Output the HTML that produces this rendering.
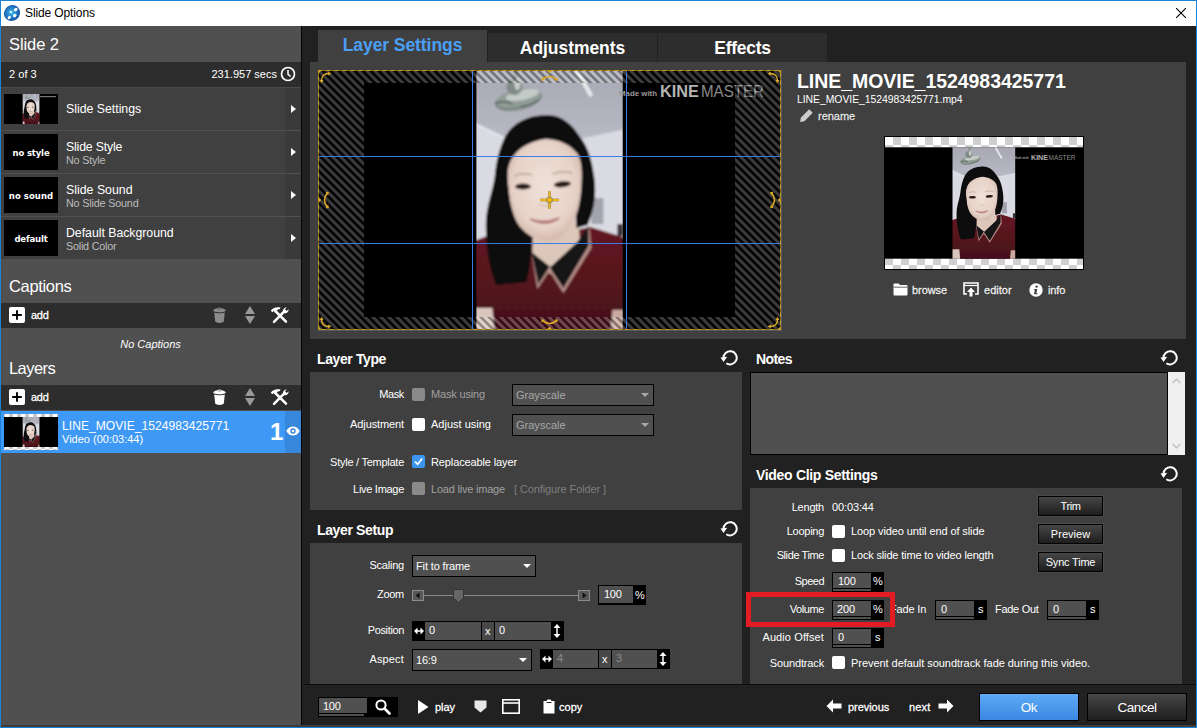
<!DOCTYPE html>
<html><head><meta charset="utf-8"><title>Slide Options</title>
<style>
*{box-sizing:border-box;margin:0;padding:0}
html,body{width:1197px;height:728px;overflow:hidden;background:#212121}
body{font-family:"Liberation Sans",sans-serif;font-size:11px;color:#fff;position:relative}
.a{position:absolute}
.t{position:absolute;white-space:nowrap;line-height:14px}
.r{text-align:right}
.lk{-webkit-text-stroke:0.300px currentColor;text-shadow:0 0 1.500px rgba(0,0,0,0.700)}
#win{position:absolute;left:0;top:0;width:1197px;height:728px;background:#212121}
#frame{left:0;top:0;width:1197px;height:728px;border:1px solid #1883d7;border-top-color:#1883d7}
#title{left:0;top:0;width:1197px;height:26px;background:#fff;color:#000}
#left{left:0;top:26px;width:301px;height:702px;background:#505050}
.item{left:0;width:301px;height:42px;background:#404040}
.item .arr{position:absolute;left:285px;top:0;width:16px;height:42px;background:#3a3a3a}
.item .arr:after{content:"";position:absolute;left:6px;top:16.500px;border-left:5px solid #fff;border-top:4.500px solid transparent;border-bottom:4.500px solid transparent}
.thumb{position:absolute;left:4px;top:6px;width:54px;height:30px;background:#000;color:#fff;font-weight:bold;font-size:8.5px;text-align:center;line-height:32px;font-family:"DejaVu Sans","Liberation Sans",sans-serif}
.thumb.tx{top:3px;height:36px;line-height:39px}
.bar{left:0;width:301px;background:#2d2d2d}
.hd{font-size:14px;font-weight:bold;line-height:16px}
.pan{background:#404040}
.cb{position:absolute;width:13px;height:13px;border-radius:2px;background:#fff}
.cb.dis{background:#8a8a8a}
.cb.on{background:#3c96f0}
.sel{position:absolute;height:22px;background:#505050;border:1px solid #000;line-height:20px;padding-left:3px;font-size:11px}
.sel:after{content:"";position:absolute;right:4px;top:8px;border-top:4.500px solid #fff;border-left:4.200px solid transparent;border-right:4.200px solid transparent}
.sel.dis{color:#a8a8a8}
.sel.dis:after{border-top-color:#a8a8a8}
.bk{position:absolute;background:#000}
.in{position:absolute;background:#505050;line-height:17px;font-size:11px;padding-left:4px}
.dim{color:#8c8c8c}
.btn{position:absolute;border:1px solid #000;background:linear-gradient(#464646,#1e1e1e);text-align:center;font-size:11px;line-height:19px;box-shadow:0 0 0 1px #4a4a4a}
</style></head><body>
<div id="win">
<svg width="0" height="0" style="position:absolute"><defs>
<linearGradient id="ceil" x1="0" y1="0" x2="0" y2="1"><stop offset="0" stop-color="#a6a7b2"/><stop offset="1" stop-color="#b8b9c4"/></linearGradient>
<linearGradient id="shirt" x1="0" y1="0" x2="0" y2="1"><stop offset="0" stop-color="#651822"/><stop offset="1" stop-color="#45101a"/></linearGradient>
<radialGradient id="face" cx="0.5" cy="0.45" r="0.6"><stop offset="0" stop-color="#efe1d8"/><stop offset="0.7" stop-color="#e6d2c8"/><stop offset="1" stop-color="#cfb0a2"/></radialGradient>
<filter id="bl" x="-5%" y="-5%" width="110%" height="110%"><feGaussianBlur stdDeviation="0.9"/></filter>
<clipPath id="pc"><rect width="146.3" height="260"/></clipPath>
<symbol id="photo" viewBox="0 0 146.3 260" overflow="hidden"><g clip-path="url(#pc)"><g filter="url(#bl)">
<rect x="-3" y="-3" width="152" height="266" fill="#dadae2"/>
<path d="M-3-3H150V59L103 69H30L-3 53z" fill="url(#ceil)"/>
<path d="M-3 53L32 70" stroke="#e4e5ee" stroke-width="2" fill="none"/>
<path d="M100 0L115 26" stroke="#e9ecef" stroke-width="4" fill="none"/>
<path d="M39 0L41 18" stroke="#8a938f" stroke-width="5" fill="none"/>
<ellipse cx="42" cy="30" rx="24" ry="10" fill="#7d8883" transform="rotate(-12 42 30)"/><ellipse cx="42" cy="28" rx="23" ry="8.500" fill="#929d98" transform="rotate(-12 42 28)"/>
<ellipse cx="46" cy="25" rx="17" ry="5" fill="#c3cbc7" transform="rotate(-12 46 25)"/>
<ellipse cx="38" cy="17" rx="8" ry="8" fill="#7f8a86"/><ellipse cx="41" cy="14" rx="3" ry="6" fill="#c9d0cc"/><path d="M19 33Q30 30 36 34" stroke="#4c5652" stroke-width="1.500" fill="none"/><path d="M44 36Q54 36 62 30" stroke="#5a6460" stroke-width="1.200" fill="none"/>
<rect x="115" y="128" width="12" height="26" fill="#a3a3ae"/>
<rect x="141" y="154" width="6" height="12" fill="#3a3038"/>
<path d="M-3 171L22 162L55 160L100 160L114 157L150 168V263H-3z" fill="url(#shirt)"/>
<path d="M-3 238H16L18 263H-3z" fill="#d9c6bd"/>
<path d="M136 240H150V263H134z" fill="#c9a9a0"/>
<path d="M56 150H102L104 178L74 204L56 188z" fill="#dcc7ba"/>
<path d="M55 184L61 219L73 201L87 223L115 178L113 156L102 172L74 200z" fill="#b48c86"/>
<path d="M55 182L62 214L73 197L87 218L112 176L112 156L101 172L74 197z" fill="#141418"/>
<path d="M70 45C50 45 35 54 28 68C23 79 20 90 18.500 105C16 125 9 135 9.500 160C10 185 15 205 20 215L50 212C54 196 56 180 56 168L48 110L97 105L100 158L111 155C118 140 120 125 118 108C115 85 110 75 103 66C96 55 86 45 71 45z" fill="#0c0c0e"/>
<path d="M37 86C44 76 58 70 70 69C84 70 95 75 102 85C105 93 106 100 105 115C104 135 100 148 94 156C88 165 80 171 72 171C60 171 48 164 41 153C35 142 31 122 31 105C31 98 33 92 37 86z" fill="url(#face)"/>
<path d="M31 108C31 98 33 90 38 82L28 84L24 110L34 135z" fill="#0c0c0e"/>
<ellipse cx="46.500" cy="116.500" rx="8" ry="3" fill="#2c1c14"/>
<ellipse cx="86" cy="114.300" rx="8.500" ry="3" fill="#2c1c14" transform="rotate(-6 86 114.300)"/>
<path d="M38 106Q46 102 56 105" stroke="#b9a496" stroke-width="1.5" fill="none"/>
<path d="M76 104Q86 100 96 103" stroke="#b9a496" stroke-width="1.5" fill="none"/>
<path d="M54 149Q68 154 83 148Q70 158 54 149z" fill="#b77a78" stroke="#b77a78" stroke-width="1.5"/>
<path d="M62 134Q68 138 75 134" stroke="#d4b8a8" stroke-width="1.5" fill="none"/>
</g></g></symbol>
</defs></svg>

<div id="title" class="a">
<svg class="a" style="left:3px;top:4px" width="18" height="18" viewBox="0 0 18 18"><defs><radialGradient id="lg" cx="0.5" cy="0.45" r="0.6"><stop offset="0" stop-color="#46c4ec"/><stop offset="0.55" stop-color="#2277c4"/><stop offset="1" stop-color="#154a94"/></radialGradient></defs><ellipse cx="9" cy="9" rx="8.300" ry="7.700" fill="url(#lg)" transform="rotate(-40 9 9)"/><ellipse cx="12.800" cy="5.500" rx="2" ry="1.500" fill="#fff" transform="rotate(-40 12.800 5.500)"/><ellipse cx="7.800" cy="8" rx="1.300" ry="1.100" fill="#fff"/><ellipse cx="11.800" cy="11.500" rx="2" ry="1.500" fill="#fff" transform="rotate(-40 11.800 11.500)"/><ellipse cx="6.300" cy="13.500" rx="1.800" ry="1.400" fill="#fff" transform="rotate(-40 6.300 13.500)"/></svg>
<div class="t" style="left:25px;top:6px;font-size:12px;letter-spacing:-0.12px">Slide Options</div>
<svg class="a" style="left:1176px;top:8px" width="10" height="10" viewBox="0 0 10 10"><path d="M0 0L10 10M10 0L0 10" stroke="#000" stroke-width="1.100" fill="none"/></svg>
</div>
<div id="left" class="a">
<div class="t" style="left:9px;top:7.500px;font-size:16.5px;line-height:20px;letter-spacing:-0.09px">Slide 2</div>
<div class="a bar" style="top:36px;height:25px"></div>
<div class="t" style="left:9px;top:41px;letter-spacing:0.03px">2 of 3</div>
<div class="t r" style="right:24px;top:41px;letter-spacing:0.01px">231.957 secs</div>
<svg class="a" style="left:280px;top:40px" width="16" height="16" viewBox="0 0 16 16"><circle cx="8" cy="8" r="6.5" fill="none" stroke="#fff" stroke-width="1.7"/><path d="M8 4v4.3l2.6 2.2" fill="none" stroke="#fff" stroke-width="1.5"/></svg>
<div class="a" style="left:0;top:61px;width:301px;height:1px;background:#4a4a4a"></div>
<div class="a item" style="top:62px"><div class="thumb"><svg width="54" height="30" viewBox="0 0 54 30" style="display:block"><rect width="54" height="30" fill="#000"/><use href="#photo" x="18.6" y="0" width="16.9" height="30"/><rect x="36" y="2" width="16" height="1.200" fill="#777"/></svg></div><div class="t" style="left:66px;top:14px;font-size:12.3px;line-height:15px;letter-spacing:-0.00px">Slide Settings</div><div class="arr"></div></div>
<div class="a item" style="top:105px"><div class="thumb tx" style=";letter-spacing:-0.15px">no style</div><div class="t" style="left:66px;top:8.5px;font-size:12.3px;line-height:15px;letter-spacing:-0.18px">Slide Style</div><div class="t" style="left:66px;top:23px;font-size:10.8px;color:#bdbdbd;line-height:13px;letter-spacing:-0.18px">No Style</div><div class="arr"></div></div>
<div class="a item" style="top:148px"><div class="thumb tx" style=";letter-spacing:0.06px">no sound</div><div class="t" style="left:66px;top:8.5px;font-size:12.3px;line-height:15px;letter-spacing:0.02px">Slide Sound</div><div class="t" style="left:66px;top:23px;font-size:10.8px;color:#bdbdbd;line-height:13px;letter-spacing:-0.18px">No Slide Sound</div><div class="arr"></div></div>
<div class="a item" style="top:191px"><div class="thumb tx" style=";letter-spacing:-0.16px">default</div><div class="t" style="left:66px;top:8.5px;font-size:12.3px;line-height:15px;letter-spacing:-0.02px">Default Background</div><div class="t" style="left:66px;top:23px;font-size:10.8px;color:#bdbdbd;line-height:13px;letter-spacing:-0.22px">Solid Color</div><div class="arr"></div></div>
<div class="t" style="left:9px;top:251px;font-size:16.500px;line-height:19px;letter-spacing:-0.34px">Captions</div>
<div class="a bar" style="top:277px;height:25px"></div>
<div class="t" style="left:0;width:301px;top:311px;text-align:center;font-style:italic;letter-spacing:0.01px">No Captions</div>
<div class="t" style="left:9px;top:333px;font-size:16.500px;line-height:19px;letter-spacing:-0.57px">Layers</div>
<div class="a bar" style="top:359px;height:25px"></div>
<svg class="a" style="left:9px;top:281px" width="16" height="16" viewBox="0 0 16 16"><rect width="16" height="16" rx="2" fill="#fff"/><path d="M8 3.2V12.8M3.200 8H12.8" stroke="#000" stroke-width="1.9"/></svg>
<div class="t lk" style="left:31px;top:282px;letter-spacing:-0.25px">add</div>
<svg class="a" style="left:213px;top:281px" width="13" height="16" viewBox="0 0 13 16"><path d="M0.3 3.600C0.3 2.200 3 1.400 4.700 1.200C5 0.200 8 0.200 8.300 1.200C10 1.400 12.700 2.200 12.700 3.600C12.700 4.800 9.800 5.400 6.500 5.400S0.300 4.800 0.300 3.600z" fill="#8c8c8c"/><path d="M1.200 5.600C3 6.500 10 6.500 11.800 5.600L10.800 14.600C10 16.300 3 16.300 2.200 14.600z" fill="#8c8c8c"/><path d="M5.300 2.200Q6.500 1.200 7.700 2.200" stroke="#2d2d2d" stroke-width="0.7" fill="none"/></svg>
<svg class="a" style="left:245px;top:280px" width="10" height="18" viewBox="0 0 10 18"><path d="M5 0L10 8H0z" fill="#999"/><path d="M5 18L10 10H0z" fill="#999"/></svg>
<svg class="a" style="left:270px;top:280px" width="20" height="18" viewBox="0 0 20 18"><path d="M4 15.800L14.500 5.200" stroke="#fff" stroke-width="2.500" stroke-linecap="round"/><path d="M16 15.600L5.800 5.500" stroke="#fff" stroke-width="2.500" stroke-linecap="round"/><path d="M0.800 4.800C2.500 1.800 6.500 0.500 10.500 1.600L9.800 3.200C8.500 3 7.500 3.400 7 4.400L5 6.400L3.600 5L2.400 6.200z" fill="#fff"/><path d="M13.200 6.400C12.200 4 14 1.200 16.800 1.400L15 3.200L16.600 5L18.600 3.200C19 5.800 16.500 7.800 14 7z" fill="#fff"/></svg>
<svg class="a" style="left:9px;top:363px" width="16" height="16" viewBox="0 0 16 16"><rect width="16" height="16" rx="2" fill="#fff"/><path d="M8 3.2V12.8M3.200 8H12.8" stroke="#000" stroke-width="1.9"/></svg>
<div class="t lk" style="left:31px;top:364px;letter-spacing:-0.25px">add</div>
<svg class="a" style="left:213px;top:363px" width="13" height="16" viewBox="0 0 13 16"><path d="M0.3 3.600C0.3 2.200 3 1.400 4.700 1.200C5 0.200 8 0.200 8.300 1.200C10 1.400 12.700 2.200 12.700 3.600C12.700 4.800 9.800 5.400 6.500 5.400S0.300 4.800 0.300 3.600z" fill="#fff"/><path d="M1.200 5.600C3 6.500 10 6.500 11.800 5.600L10.800 14.600C10 16.300 3 16.300 2.200 14.600z" fill="#fff"/><path d="M5.300 2.200Q6.500 1.200 7.700 2.200" stroke="#2d2d2d" stroke-width="0.7" fill="none"/></svg>
<svg class="a" style="left:245px;top:362px" width="10" height="18" viewBox="0 0 10 18"><path d="M5 0L10 8H0z" fill="#999"/><path d="M5 18L10 10H0z" fill="#999"/></svg>
<svg class="a" style="left:270px;top:362px" width="20" height="18" viewBox="0 0 20 18"><path d="M4 15.800L14.500 5.200" stroke="#fff" stroke-width="2.500" stroke-linecap="round"/><path d="M16 15.600L5.800 5.500" stroke="#fff" stroke-width="2.500" stroke-linecap="round"/><path d="M0.800 4.800C2.500 1.800 6.500 0.500 10.500 1.600L9.800 3.200C8.500 3 7.500 3.400 7 4.400L5 6.400L3.600 5L2.400 6.200z" fill="#fff"/><path d="M13.200 6.400C12.200 4 14 1.200 16.800 1.400L15 3.200L16.600 5L18.600 3.200C19 5.800 16.500 7.800 14 7z" fill="#fff"/></svg>
<div class="a" style="left:0;top:385px;width:301px;height:42px;background:#3e98f5"><div class="a" style="left:285px;top:0;width:16px;height:42px;background:#3787dc"></div>
<svg class="a" style="left:4px;top:3px" width="54" height="36" viewBox="0 0 54 36"><defs><pattern id="chk2" width="8" height="8" patternUnits="userSpaceOnUse" patternTransform="translate(1 -1)"><rect width="8" height="8" fill="#fff"/><rect x="4" width="4" height="4" fill="#c8c8c8"/><rect y="4" width="4" height="4" fill="#c8c8c8"/></pattern></defs><rect width="54" height="36" fill="url(#chk2)"/><rect y="3" width="54" height="30" fill="#000"/><use href="#photo" x="18.6" y="3" width="16.900" height="30"/></svg>
<div class="t" style="left:62px;top:8px;font-size:12.1px;letter-spacing:0.02px">LINE_MOVIE_1524983425771</div>
<div class="t" style="left:62px;top:22px;font-size:11px;line-height:13px;letter-spacing:0.00px">Video (00:03:44)</div>
<div class="t" style="left:270px;top:7px;font-size:24px;font-weight:bold;line-height:28px">1</div>
<svg class="a" style="left:286px;top:15px" width="14" height="10" viewBox="0 0 14 10"><path d="M0.3 5C2 1.8 4.4 0.5 7 0.5s5 1.3 6.7 4.5C12 8.2 9.6 9.5 7 9.5S2 8.2 0.3 5z" fill="#fff"/><circle cx="7" cy="5" r="2.7" fill="#3787dc"/><circle cx="7" cy="5" r="1.3" fill="#fff"/></svg>
</div>
</div>
<div class="a" style="left:301px;top:26px;width:1px;height:702px;background:#050505"></div>
<!-- tabs -->
<div class="a" style="left:318px;top:30px;width:169px;height:33px;background:#404040"></div>
<div class="t" style="left:318px;top:35.300px;width:169px;text-align:center;font-size:17.5px;font-weight:bold;color:#4a9ff5;line-height:20px;letter-spacing:-0.07px">Layer Settings</div>
<div class="a" style="left:488px;top:33px;width:169px;height:29px;background:#2d2d2d"></div>
<div class="t" style="left:488px;top:37.700px;width:169px;text-align:center;font-size:17.5px;font-weight:bold;line-height:20px;letter-spacing:-0.06px">Adjustments</div>
<div class="a" style="left:658px;top:33px;width:169px;height:29px;background:#2d2d2d"></div>
<div class="t" style="left:658px;top:37.700px;width:169px;text-align:center;font-size:17.5px;font-weight:bold;line-height:20px;letter-spacing:-0.27px">Effects</div>
<div class="a pan" style="left:310px;top:62px;width:876px;height:277px"></div>
<svg class="a" style="left:318px;top:70px" width="463" height="260" viewBox="0 0 463 260">
<defs><pattern id="hatch" width="5.657" height="5.657" patternUnits="userSpaceOnUse" patternTransform="rotate(-45) translate(1.4 0)"><rect width="2.550" height="5.657" fill="rgba(0,0,0,0.340)"/><rect x="2.550" width="3.110" height="5.657" fill="rgba(255,255,255,0.235)"/></pattern></defs>
<rect width="463" height="260" fill="#000"/>
<use href="#photo" x="158.4" y="0" width="146.3" height="260"/>
<text x="301" y="25.500" font-size="8" font-weight="bold" fill="#9a9a9a" font-family="Liberation Sans,sans-serif" textLength="38" lengthAdjust="spacingAndGlyphs">Made with</text>
<text x="342" y="27" font-size="17" font-weight="bold" fill="#b4b4b4" font-family="Liberation Sans,sans-serif" textLength="39" lengthAdjust="spacingAndGlyphs">KINE</text>
<text x="383" y="27" font-size="17" fill="#8a8a8a" font-family="Liberation Sans,sans-serif" textLength="63" lengthAdjust="spacingAndGlyphs">MASTER</text>
<path d="M0 0H463V260H0zM46 13V247H417V13z" fill="url(#hatch)" fill-rule="evenodd"/>
<path d="M154.5 0V260M308.5 0V260M0 86.5H463M0 173.5H463" stroke="#3d7be6" stroke-width="1" fill="none"/>
<rect x="0.5" y="0.5" width="462" height="259" fill="none" stroke="#8a680e" stroke-width="1"/><rect x="0.5" y="0.5" width="462" height="259" fill="none" stroke="#c89c24" stroke-width="1" stroke-dasharray="4 4"/>
<g transform="translate(231.500 0.500)"><path d="M-2.700 0H2.700L0 2.800z" fill="#dcaa24"/><path d="M-6.500 8.500Q0 3.500 6.500 8.500" fill="none" stroke="#dcaa24" stroke-width="1.600"/><path d="M-8.200 6.800L-4.600 9.600L-8 10.400z" fill="#dcaa24"/><path d="M8.200 6.800L4.600 9.600L8 10.400z" fill="#dcaa24"/></g><g transform="translate(231.500 259.500) scale(1 -1)"><path d="M-2.700 0H2.700L0 2.800z" fill="#dcaa24"/><path d="M-6.500 8.500Q0 3.500 6.500 8.500" fill="none" stroke="#dcaa24" stroke-width="1.600"/><path d="M-8.200 6.800L-4.600 9.600L-8 10.400z" fill="#dcaa24"/><path d="M8.200 6.800L4.600 9.600L8 10.400z" fill="#dcaa24"/></g><g transform="translate(0.500 130) rotate(-90)"><path d="M-2.700 0H2.700L0 2.800z" fill="#dcaa24"/><path d="M-6.500 8.500Q0 3.500 6.500 8.500" fill="none" stroke="#dcaa24" stroke-width="1.600"/><path d="M-8.200 6.800L-4.600 9.600L-8 10.400z" fill="#dcaa24"/><path d="M8.200 6.800L4.600 9.600L8 10.400z" fill="#dcaa24"/></g><g transform="translate(462.500 130) rotate(90)"><path d="M-2.700 0H2.700L0 2.800z" fill="#dcaa24"/><path d="M-6.500 8.500Q0 3.500 6.500 8.500" fill="none" stroke="#dcaa24" stroke-width="1.600"/><path d="M-8.200 6.800L-4.600 9.600L-8 10.400z" fill="#dcaa24"/><path d="M8.200 6.800L4.600 9.600L8 10.400z" fill="#dcaa24"/></g>
<g transform="translate(0.500 0.500)"><path d="M0 0H3L0 3z" fill="#dcaa24"/><path d="M10.800 3Q2.800 2.800 3 10.800" fill="none" stroke="#dcaa24" stroke-width="1.400"/><path d="M12.800 3.200L9.600 1L9.600 5z" fill="#dcaa24"/><path d="M3.200 12.800L1 9.600L5 9.600z" fill="#dcaa24"/></g><g transform="translate(462.500 0.500) scale(-1 1)"><path d="M0 0H3L0 3z" fill="#dcaa24"/><path d="M10.800 3Q2.800 2.800 3 10.800" fill="none" stroke="#dcaa24" stroke-width="1.400"/><path d="M12.800 3.200L9.600 1L9.600 5z" fill="#dcaa24"/><path d="M3.200 12.800L1 9.600L5 9.600z" fill="#dcaa24"/></g><g transform="translate(0.500 259.500) scale(1 -1)"><path d="M0 0H3L0 3z" fill="#dcaa24"/><path d="M10.800 3Q2.800 2.800 3 10.800" fill="none" stroke="#dcaa24" stroke-width="1.400"/><path d="M12.800 3.200L9.600 1L9.600 5z" fill="#dcaa24"/><path d="M3.200 12.800L1 9.600L5 9.600z" fill="#dcaa24"/></g><g transform="translate(462.500 259.500) scale(-1 -1)"><path d="M0 0H3L0 3z" fill="#dcaa24"/><path d="M10.800 3Q2.800 2.800 3 10.800" fill="none" stroke="#dcaa24" stroke-width="1.400"/><path d="M12.800 3.200L9.600 1L9.600 5z" fill="#dcaa24"/><path d="M3.200 12.800L1 9.600L5 9.600z" fill="#dcaa24"/></g>
<path d="M231.500 121V139M222 130H241" stroke="#555" stroke-width="3" stroke-opacity="0.500" fill="none"/><path d="M231.500 121V139M222 130H241" stroke="#edb512" stroke-width="1.800" fill="none"/><circle cx="231.500" cy="130" r="3" fill="#edb512" stroke="#666" stroke-width="0.600"/>
</svg>
<div class="a" style="left:318px;top:330px;width:464px;height:1px;background:#585c60"></div><div class="a" style="left:781px;top:70px;width:1px;height:260px;background:#585c60"></div>
<div class="t" style="left:797px;top:70px;font-size:19.500px;font-weight:bold;line-height:22px;letter-spacing:-0.05px">LINE_MOVIE_1524983425771</div>
<div class="t" style="left:797px;top:93px;font-size:10.400px;line-height:13px;letter-spacing:-0.03px">LINE_MOVIE_1524983425771.mp4</div>
<svg class="a" style="left:799px;top:108px" width="15" height="15" viewBox="0 0 14 14"><path d="M9.5 1.2l3.3 3.3L5 12.3 1 13l0.7-4z" fill="#ccc"/></svg>
<div class="t lk" style="left:818px;top:109px;color:#e6e6e6;letter-spacing:-0.03px">rename</div>
<svg class="a" style="left:884px;top:136px" width="200" height="134" viewBox="0 0 200 134">
<defs><pattern id="chk" width="16" height="16" patternUnits="userSpaceOnUse" patternTransform="translate(1 1)"><rect width="16" height="16" fill="#fff"/><rect x="8" width="8" height="8" fill="#cfcfcf"/><rect y="8" width="8" height="8" fill="#cfcfcf"/></pattern></defs>
<rect width="200" height="134" fill="#000"/><rect x="1" y="1" width="198" height="132" fill="url(#chk)"/>
<rect x="1" y="11.3" width="198" height="111.4" fill="#000"/>
<use href="#photo" x="68.5" y="11.3" width="62.7" height="111.4"/>
<text x="130" y="23" font-size="3" font-weight="bold" fill="#999" font-family="Liberation Sans,sans-serif">Made with</text>
<text x="147" y="23.5" font-size="6.5" font-weight="bold" fill="#b4b4b4" font-family="Liberation Sans,sans-serif" textLength="17" lengthAdjust="spacingAndGlyphs">KINE</text>
<text x="164.5" y="23.5" font-size="6.5" fill="#8a8a8a" font-family="Liberation Sans,sans-serif" textLength="27" lengthAdjust="spacingAndGlyphs">MASTER</text>
</svg>
<svg class="a" style="left:893px;top:283px" width="15" height="13" viewBox="0 0 15 13"><path d="M0.5 1.5Q0.5 0.5 1.5 0.5H5.5L7 2H13.5Q14.5 2 14.5 3V11.5Q14.5 12.5 13.5 12.5H1.5Q0.5 12.5 0.5 11.5z" fill="#fff"/><path d="M0.5 4.2H14.5" stroke="#404040" stroke-width="0.8"/></svg>
<div class="t lk" style="left:912px;top:283px;color:#f0f0f0;letter-spacing:-0.06px">browse</div>
<svg class="a" style="left:963px;top:282px" width="16" height="15" viewBox="0 0 16 15"><path d="M4 12H1V1H15V12H12" fill="none" stroke="#fff" stroke-width="1.6"/><path d="M1 3.5H15" stroke="#fff" stroke-width="1.2"/><path d="M8 5.5L12 10H9.5V14.5H6.5V10H4z" fill="#fff"/></svg>
<div class="t lk" style="left:984px;top:283px;color:#f0f0f0;letter-spacing:0.03px">editor</div>
<svg class="a" style="left:1029px;top:283px" width="14" height="14" viewBox="0 0 14 14"><circle cx="7" cy="7" r="6.7" fill="#fff"/><circle cx="7.6" cy="3.6" r="1.2" fill="#404040"/><path d="M5.3 6H8.2L7.4 10.3H8.5V11.3H5L5.8 7H5.1z" fill="#404040"/></svg>
<div class="t lk" style="left:1048px;top:283px;color:#f0f0f0;letter-spacing:-0.11px">info</div>
<!-- layer type -->
<div class="t hd" style="left:317px;top:351px;letter-spacing:-0.39px">Layer Type</div>
<svg class="a" style="left:720px;top:349px" width="18" height="18" viewBox="0 0 18 18"><path d="M3.500 8.800A6.600 6.600 0 1 1 6.300 14.200" fill="none" stroke="#fff" stroke-width="2"/><path d="M0.500 8.400L7.200 7.800L3.600 13z" fill="#fff"/></svg><svg class="a" style="left:720px;top:520px" width="18" height="18" viewBox="0 0 18 18"><path d="M3.500 8.800A6.600 6.600 0 1 1 6.300 14.200" fill="none" stroke="#fff" stroke-width="2"/><path d="M0.500 8.400L7.200 7.800L3.600 13z" fill="#fff"/></svg><svg class="a" style="left:1160px;top:349px" width="18" height="18" viewBox="0 0 18 18"><path d="M3.500 8.800A6.600 6.600 0 1 1 6.300 14.200" fill="none" stroke="#fff" stroke-width="2"/><path d="M0.500 8.400L7.200 7.800L3.600 13z" fill="#fff"/></svg><svg class="a" style="left:1160px;top:465px" width="18" height="18" viewBox="0 0 18 18"><path d="M3.500 8.800A6.600 6.600 0 1 1 6.300 14.200" fill="none" stroke="#fff" stroke-width="2"/><path d="M0.500 8.400L7.200 7.800L3.600 13z" fill="#fff"/></svg>
<div class="a pan" style="left:310px;top:372px;width:432px;height:138px"></div>
<div class="t r" style="right:793px;top:387px;letter-spacing:-0.37px">Mask</div>
<div class="cb dis" style="left:412px;top:388px"></div>
<div class="t" style="left:431px;top:387px;color:#a0a0a0;letter-spacing:-0.17px">Mask using</div>
<div class="sel dis" style="left:512px;top:384px;width:142px;letter-spacing:0.01px">Grayscale</div>
<div class="t r" style="right:793px;top:417px;letter-spacing:-0.11px">Adjustment</div>
<div class="cb" style="left:412px;top:418px"></div>
<div class="t" style="left:431px;top:417px;letter-spacing:-0.00px">Adjust using</div>
<div class="sel dis" style="left:512px;top:414px;width:142px;letter-spacing:0.01px">Grayscale</div>
<div class="t r" style="right:793px;top:455px;letter-spacing:-0.26px">Style / Template</div>
<div class="cb on" style="left:412px;top:455px"><svg width="13" height="13" viewBox="0 0 13 13" style="display:block"><path d="M3 6.6l2.6 2.7L10.2 3.4" fill="none" stroke="#fff" stroke-width="1.7"/></svg></div>
<div class="t" style="left:431px;top:455px;letter-spacing:-0.12px">Replaceable layer</div>
<div class="t r" style="right:793px;top:482px;letter-spacing:-0.29px">Live Image</div>
<div class="cb dis" style="left:412px;top:482px"></div>
<div class="t" style="left:431px;top:482px;color:#a0a0a0;letter-spacing:-0.21px">Load live image</div>
<div class="t" style="left:514px;top:482px;color:#7d7d7d;letter-spacing:-0.11px">[ Configure Folder ]</div>
<!-- layer setup -->
<div class="t hd" style="left:317px;top:522px;letter-spacing:-0.36px">Layer Setup</div>
<div class="a pan" style="left:310px;top:543px;width:432px;height:141px"></div>
<div class="t r" style="right:793px;top:558px;letter-spacing:-0.21px">Scaling</div>
<div class="sel" style="left:412px;top:555px;width:124px;letter-spacing:-0.14px">Fit to frame</div>
<div class="t r" style="right:793px;top:587px;letter-spacing:-0.28px">Zoom</div>
<div class="a" style="left:424px;top:595px;width:154px;height:1px;background:#888"></div>
<div class="a" style="left:412px;top:590px;width:12px;height:11px;background:#585858;border:1px solid #8c8c8c"></div><svg class="a" style="left:415px;top:592px" width="5" height="7" viewBox="0 0 5 7"><path d="M4.500 0.500V6.500L0.500 3.500z" fill="#111"/></svg>
<div class="a" style="left:578px;top:590px;width:12px;height:11px;background:#585858;border:1px solid #8c8c8c"></div><svg class="a" style="left:582px;top:592px" width="5" height="7" viewBox="0 0 5 7"><path d="M0.500 0.500V6.500L4.500 3.500z" fill="#111"/></svg>
<svg class="a" style="left:453px;top:589px" width="11" height="14" viewBox="0 0 11 14"><path d="M0.500 0.500H10.500V9L5.500 13.500L0.500 9z" fill="#666" stroke="#333" stroke-width="1"/></svg>
<div class="bk" style="left:598px;top:585px;width:48px;height:20px"></div><div class="in" style="left:599px;top:586px;width:34px;height:17px;padding-left:5px;letter-spacing:-0.29px">100</div><div class="t" style="left:635px;top:588px">%</div>
<div class="t r" style="right:793px;top:623px;letter-spacing:-0.36px">Position</div>
<div class="bk" style="left:412px;top:621px;width:152px;height:20px"></div>
<div class="in" style="left:425px;top:622px;width:56px;height:18px;line-height:17px">0</div><div class="in" style="left:482px;top:622px;width:12px;height:18px;padding-left:3px;line-height:19px;background:#484848">x</div><div class="in" style="left:495px;top:622px;width:56px;height:18px;line-height:17px">0</div>
<div class="t r" style="right:793px;top:652px;letter-spacing:0.16px">Aspect</div>
<div class="sel" style="left:412px;top:649px;width:120px;letter-spacing:-0.21px">16:9</div>
<div class="bk" style="left:540px;top:649px;width:130px;height:20px"></div>
<div class="in dim" style="left:553px;top:650px;width:45px;height:18px;line-height:17px">4</div><div class="in" style="left:599px;top:650px;width:12px;height:18px;padding-left:3px;line-height:19px;background:#484848">x</div><div class="in dim" style="left:612px;top:650px;width:45px;height:18px;line-height:17px">3</div>
<svg class="a" style="left:414px;top:627px" width="10" height="8" viewBox="0 0 10 8"><path d="M0 4L3.500 0.500V7.500zM10 4L6.500 0.500V7.500z" fill="#fff"/><path d="M2 4H8" stroke="#fff" stroke-width="1.500"/></svg>
<svg class="a" style="left:553px;top:624px" width="8" height="14" viewBox="0 0 8 14"><path d="M4 0L7.500 4H0.500zM4 14L7.500 10H0.500z" fill="#fff"/><path d="M4 3V11" stroke="#fff" stroke-width="1.500"/></svg>
<svg class="a" style="left:542px;top:655px" width="10" height="8" viewBox="0 0 10 8"><path d="M0 4L3.500 0.500V7.500zM10 4L6.500 0.500V7.500z" fill="#fff"/><path d="M2 4H8" stroke="#fff" stroke-width="1.500"/></svg>
<svg class="a" style="left:659px;top:652px" width="8" height="14" viewBox="0 0 8 14"><path d="M4 0L7.500 4H0.500zM4 14L7.500 10H0.500z" fill="#fff"/><path d="M4 3V11" stroke="#fff" stroke-width="1.500"/></svg>
<!-- bottom bar -->
<div class="a" style="left:303px;top:684px;width:893px;height:1px;background:#0c0c0c"></div>
<div class="bk" style="left:318px;top:697px;width:80px;height:20px"></div><div class="in" style="left:319px;top:698px;width:48px;height:15px;line-height:16px;letter-spacing:-0.29px">100</div><div class="a" style="left:319px;top:714px;width:45px;height:2px;background:#505050"></div>
<svg class="a" style="left:375px;top:699px" width="16" height="16" viewBox="0 0 16 16"><circle cx="6" cy="6" r="4.600" fill="none" stroke="#fff" stroke-width="2"/><path d="M9.500 9.500L14.500 14.500" stroke="#fff" stroke-width="2.600" stroke-linecap="round"/></svg>
<svg class="a" style="left:418px;top:700px" width="11" height="14" viewBox="0 0 11 14"><path d="M0 0L10.500 7L0 14z" fill="#fff"/></svg>
<svg class="a" style="left:474px;top:700px" width="13" height="13" viewBox="0 0 13 13"><path d="M0.500 0.500H12.500V7.500L6.500 12.500L0.500 7.500z" fill="#e8e8e8"/></svg>
<svg class="a" style="left:502px;top:699px" width="18" height="15" viewBox="0 0 18 15"><rect x="0.800" y="0.800" width="16.400" height="13.400" fill="none" stroke="#fff" stroke-width="1.600"/><path d="M1 4H17" stroke="#fff" stroke-width="1.600"/></svg>
<svg class="a" style="left:543px;top:699px" width="12" height="15" viewBox="0 0 12 15"><path d="M0.500 2H3.500L4.500 0.500H7.500L8.500 2H11.500V14.500H0.500z" fill="#fff"/><path d="M3.500 3.500H8.500" stroke="#222" stroke-width="1"/></svg>
<svg class="a" style="left:826px;top:699px" width="16" height="14" viewBox="0 0 16 14"><path d="M0.500 7L7 0.500V4.500H15.500V9.500H7V13.500z" fill="#fff"/></svg>
<svg class="a" style="left:938px;top:699px" width="16" height="14" viewBox="0 0 16 14"><path d="M15.500 7L9 0.500V4.500H0.500V9.500H9V13.500z" fill="#fff"/></svg>
<div class="t lk" style="left:435px;top:700px;letter-spacing:-0.05px">play</div>
<div class="t lk" style="left:559px;top:700px;letter-spacing:0.01px">copy</div>
<div class="t lk" style="left:848px;top:700px;letter-spacing:-0.05px">previous</div>
<div class="t lk" style="left:909px;top:700px;letter-spacing:0.15px">next</div>
<div class="btn" style="left:979px;top:693px;width:100px;height:28px;background:linear-gradient(#5eaaf6,#3a88e2);font-size:13.500px;line-height:27.500px;box-shadow:none;letter-spacing:-0.43px">Ok</div>
<div class="btn" style="left:1087px;top:693px;width:100px;height:28px;font-size:13.500px;line-height:27.500px;box-shadow:none;letter-spacing:-0.47px">Cancel</div>
<!-- notes -->
<div class="t hd" style="left:756px;top:351px;letter-spacing:-0.60px">Notes</div>
<div class="a" style="left:750px;top:372px;width:418px;height:83px;background:#505050;border:1px solid #000"></div>
<div class="a" style="left:1168px;top:372px;width:17px;height:83px;background:#f0f0f0"></div>
<svg class="a" style="left:1172px;top:378px" width="9" height="6" viewBox="0 0 9 6"><path d="M0.7 5L4.5 1.2L8.3 5" fill="none" stroke="#bdbdbd" stroke-width="1.3"/></svg>
<svg class="a" style="left:1172px;top:443px" width="9" height="6" viewBox="0 0 9 6"><path d="M0.7 1L4.5 4.8L8.3 1" fill="none" stroke="#bdbdbd" stroke-width="1.3"/></svg>
<!-- video clip settings -->
<div class="t hd" style="left:756px;top:467px;letter-spacing:-0.31px">Video Clip Settings</div>
<div class="a pan" style="left:750px;top:488px;width:432px;height:196px"></div>
<div class="t r" style="right:373px;top:500px;letter-spacing:-0.23px">Length</div><div class="t" style="left:832px;top:500px;letter-spacing:-0.12px">00:03:44</div>
<div class="t r" style="right:373px;top:524px;letter-spacing:-0.27px">Looping</div><div class="cb" style="left:832px;top:525px"></div><div class="t" style="left:851px;top:524px;letter-spacing:-0.10px">Loop video until end of slide</div>
<div class="t r" style="right:373px;top:548px;letter-spacing:-0.40px">Slide Time</div><div class="cb" style="left:832px;top:549px"></div><div class="t" style="left:851px;top:548px;letter-spacing:-0.16px">Lock slide time to video length</div>
<div class="t r" style="right:373px;top:574px;letter-spacing:-0.50px">Speed</div>
<div class="bk" style="left:832px;top:572px;width:52px;height:20px"></div><div class="in" style="left:833px;top:573px;width:38px;height:15px;padding-left:5px;letter-spacing:-0.29px">100</div><div class="a" style="left:833px;top:589px;width:38px;height:2px;background:#505050"></div><div class="t" style="left:873px;top:574px">%</div>
<div class="t r" style="right:373px;top:602px;letter-spacing:-0.40px">Volume</div>
<div class="bk" style="left:832px;top:600px;width:52px;height:20px"></div><div class="in" style="left:833px;top:601px;width:38px;height:15px;padding-left:4px;letter-spacing:-0.12px">200</div><div class="a" style="left:833px;top:617px;width:38px;height:2px;background:#505050"></div><div class="t" style="left:873px;top:602px">%</div>
<div class="t" style="left:890px;top:602px;letter-spacing:-0.16px">Fade In</div>
<div class="bk" style="left:935px;top:600px;width:52px;height:20px"></div><div class="in" style="left:936px;top:601px;width:38px;height:15px;padding-left:5px">0</div><div class="a" style="left:936px;top:617px;width:38px;height:2px;background:#505050"></div><div class="t" style="left:978px;top:602px">s</div>
<div class="t" style="left:995px;top:602px;letter-spacing:-0.28px">Fade Out</div>
<div class="bk" style="left:1047px;top:600px;width:52px;height:20px"></div><div class="in" style="left:1048px;top:601px;width:38px;height:15px;padding-left:5px">0</div><div class="a" style="left:1048px;top:617px;width:38px;height:2px;background:#505050"></div><div class="t" style="left:1090px;top:602px">s</div>
<div class="a" style="left:746px;top:592px;width:149px;height:35px;border:5px solid #e31b23"></div>
<div class="t r" style="right:373px;top:630px;letter-spacing:0.10px">Audio Offset</div>
<div class="bk" style="left:832px;top:628px;width:52px;height:20px"></div><div class="in" style="left:833px;top:629px;width:38px;height:15px;padding-left:5px">0</div><div class="a" style="left:833px;top:645px;width:38px;height:2px;background:#505050"></div><div class="t" style="left:875px;top:630px">s</div>
<div class="t r" style="right:373px;top:656px;letter-spacing:-0.15px">Soundtrack</div><div class="cb" style="left:832px;top:656px"></div><div class="t" style="left:851px;top:656px;letter-spacing:-0.05px">Prevent default soundtrack fade during this video.</div>
<div class="btn" style="left:1038px;top:496px;width:65px;height:20px;letter-spacing:-0.42px">Trim</div>
<div class="btn" style="left:1038px;top:524px;width:65px;height:20px;letter-spacing:0.02px">Preview</div>
<div class="btn" style="left:1038px;top:552px;width:65px;height:20px;letter-spacing:-0.20px">Sync Time</div>

<div class="a" style="left:1px;top:725px;width:1195px;height:2px;background:#3e3c3a"></div>
<div id="frame" class="a"></div>
</div>
</body></html>
